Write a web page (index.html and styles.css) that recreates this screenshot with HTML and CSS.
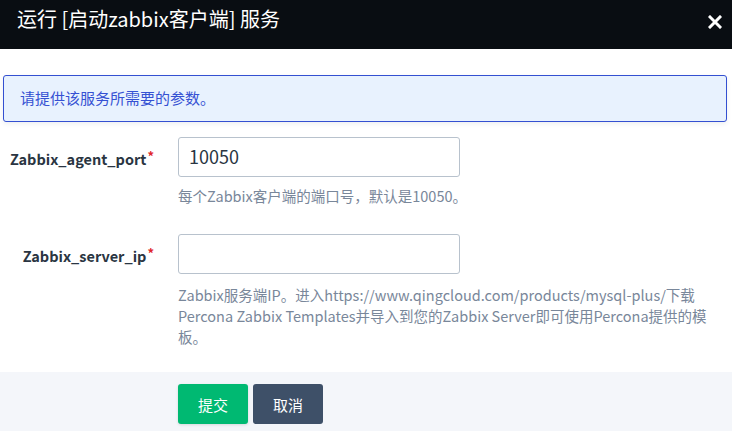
FILE: index.html
```html
<!DOCTYPE html>
<html lang="zh">
<head>
<meta charset="utf-8">
<title>运行服务</title>
<link rel="stylesheet" href="styles.css">
</head>
<body>
<div class="dialog">
  <div class="header">
    <div class="title">运行 [启动zabbix客户端] 服务</div>
    <div class="close">
      <svg width="14" height="14" viewBox="0 0 14 14"><path d="M2 2 L12 12 M12 2 L2 12" stroke="#ffffff" stroke-width="3" stroke-linecap="square" fill="none"/></svg>
    </div>
  </div>
  <div class="body">
    <div class="info">请提供该服务所需要的参数。</div>
    <div class="row row1">
      <label class="label">Zabbix_agent_port<span class="req">*</span></label>
      <div class="field">
        <div class="input">10050</div>
        <div class="help help1">每个Zabbix客户端的端口号，默认是10050。</div>
      </div>
    </div>
    <div class="row row2">
      <label class="label">Zabbix_server_ip<span class="req">*</span></label>
      <div class="field">
        <div class="input"></div>
        <div class="help help2">Zabbix服务端IP。进入https://www.qingcloud.com/products/mysql-plus/下载Percona Zabbix Templates并导入到您的Zabbix Server即可使用Percona提供的模板。</div>
      </div>
    </div>
  </div>
  <div class="footer">
    <button class="btn btn-primary">提交</button>
    <button class="btn btn-default">取消</button>
  </div>
</div>
</body>
</html>
```
FILE: styles.css
```css
html, body {
  margin: 0;
  padding: 0;
  background: #ffffff;
}
body {
  width: 732px;
  height: 431px;
  overflow: hidden;
  font-family: "Noto Sans CJK SC", "Noto Sans", sans-serif;
}
.dialog {
  display: flex;
  flex-direction: column;
  height: 431px;
}
.header {
  height: 49px;
  box-sizing: border-box;
  background: #090d12;
  display: flex;
  align-items: flex-start;
  justify-content: space-between;
  padding: 5px 10px 0 17px;
}
.title {
  color: #ffffff;
  font-size: 20px;
  line-height: 28px;
}
.close {
  margin-top: 10px;
  width: 14px;
  height: 14px;
  display: flex;
}
.body {
  padding: 26px 5px 0 3px;
}
.info {
  background: #e8f2fe;
  border: 1px solid #3450d1;
  border-radius: 3px;
  box-shadow: 0 2px 4px rgba(40, 60, 90, 0.08);
  color: #3551d3;
  font-size: 15px;
  line-height: 20px;
  padding: 12px 16px 13px 16px;
}
.row {
  display: grid;
  grid-template-columns: 154px 1fr;
  column-gap: 24px;
  margin-left: -3px;
}
.row1 {
  margin-top: 15px;
}
.row2 {
  margin-top: 28px;
}
.label {
  text-align: right;
  font-weight: 700;
  font-size: 14.5px;
  color: #2a3542;
  line-height: 38px;
  height: 40px;
}
.req {
  color: #e0262e;
  font-size: 13px;
  vertical-align: 4px;
  margin-left: 1px;
}
.field {
  display: flex;
  flex-direction: column;
}
.input {
  width: 282px;
  height: 40px;
  box-sizing: border-box;
  border: 1px solid #b8c2cd;
  border-radius: 3px;
  padding: 0 10px;
  font-size: 18px;
  line-height: 37px;
  color: #2a3542;
}
.help {
  color: #79879a;
  font-size: 14.5px;
  line-height: 21px;
  width: 550px;
}
.help1 {
  margin-top: 8px;
}
.help2 {
  margin-top: 10px;
}
.footer {
  margin-top: auto;
  height: 59px;
  box-sizing: border-box;
  background: #f4f6fa;
  padding: 12px 0 0 178px;
  display: flex;
  gap: 5px;
  align-items: flex-start;
}
.btn {
  width: 70px;
  height: 40px;
  border: none;
  border-radius: 3px;
  color: #ffffff;
  font-family: "Noto Sans CJK SC", "Noto Sans", sans-serif;
  font-size: 15px;
  padding: 0;
  cursor: pointer;
}
.btn-primary {
  background: #00b972;
  box-shadow: 0 1px 3px rgba(0, 0, 0, 0.12);
}
.btn-default {
  background: #3e5068;
}
```
